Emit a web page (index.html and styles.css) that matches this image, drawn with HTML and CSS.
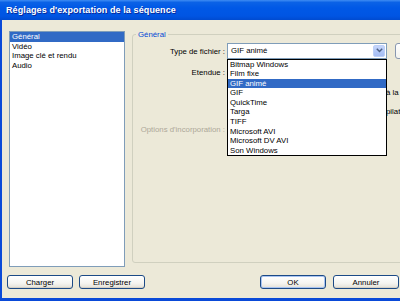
FILE: index.html
```html
<!DOCTYPE html>
<html lang="fr">
<head>
<meta charset="utf-8">
<title>Réglages d'exportation de la séquence</title>
<link rel="stylesheet" href="styles.css">
</head>
<body>
<div class="win">
  <div class="titlebar">Réglages d'exportation de la séquence</div>
  <div class="frame">
    <div class="dialog">
      <div class="top">
        <ul class="listbox">
          <li class="sel">Général</li>
          <li>Vidéo</li>
          <li>Image clé et rendu</li>
          <li>Audio</li>
        </ul>
        <fieldset class="group">
          <legend>Général</legend>
          <div class="form">
            <div class="lbl r1">Type de fichier :</div>
            <div class="ctl r1">
              <div class="combo">
                <span class="combo-val">GIF animé</span>
                <span class="combo-btn"><svg width="7" height="5" viewBox="0 0 7 5"><path d="M0.8 0.8 L3.5 3.5 L6.2 0.8" fill="none" stroke="#4d6185" stroke-width="1.5"/></svg></span>
                <ul class="popup">
                  <li>Bitmap Windows</li>
                  <li>Film fixe</li>
                  <li class="sel">GIF animé</li>
                  <li>GIF</li>
                  <li>QuickTime</li>
                  <li>Targa</li>
                  <li>TIFF</li>
                  <li>Microsoft AVI</li>
                  <li>Microsoft DV AVI</li>
                  <li>Son Windows</li>
                </ul>
              </div>
              <button class="side-btn" aria-label="Paramètres"></button>
            </div>
            <div class="lbl r2">Etendue :</div>
            <div class="ctl r2"></div>
            <div class="lbl r3"></div>
            <div class="ctl r3"><span class="frag">à la l</span></div>
            <div class="lbl r4"></div>
            <div class="ctl r4"><span class="frag">pilat</span></div>
            <div class="lbl r5 dis">Options d'incorporation :</div>
            <div class="ctl r5"></div>
          </div>
        </fieldset>
      </div>
      <div class="buttons">
        <div class="bgroup">
          <button class="btn w66">Charger</button>
          <button class="btn w66">Enregistrer</button>
        </div>
        <div class="bgroup">
          <button class="btn w66 def">OK</button>
          <button class="btn w66">Annuler</button>
        </div>
      </div>
    </div>
  </div>
</div>
</body>
</html>
```
FILE: styles.css
```css
* { box-sizing: border-box; }
html, body { margin: 0; padding: 0; }
body {
  width: 400px;
  height: 301px;
  overflow: hidden;
  font-family: "Liberation Sans", Arial, sans-serif;
  font-size: 7.8px;
  color: #000;
  background: #ECE9D8;
}
.win {
  width: 400px;
  height: 301px;
  display: flex;
  flex-direction: column;
}
.titlebar {
  height: 20px;
  flex: none;
  padding-left: 6px;
  display: flex;
  align-items: center;
  color: #fff;
  font-weight: bold;
  font-size: 9px;
  letter-spacing: 0.1px;
  text-shadow: 1px 1px 0 #0a2a9a;
  background: linear-gradient(#3f8cf3 0%, #0b62e6 12%, #0058e6 40%, #0055e3 80%, #004bd0 100%);
  white-space: nowrap;
}
.frame {
  flex: 1;
  display: flex;
  border-left: 2px solid #0a4ad8;
  border-bottom: 3px solid #0a4ad8;
  min-height: 0;
}
.dialog {
  flex: 1;
  background: #ECE9D8;
  padding: 11px 0 9px 5px;
  display: flex;
  flex-direction: column;
  min-width: 0;
}
.top {
  height: 236px;
  display: flex;
  align-items: flex-start;
}
.listbox {
  margin: 0 0 0 2px;
  padding: 0;
  list-style: none;
  width: 116px;
  height: 236px;
  flex: none;
  background: #fff;
  border: 1px solid #7f9db9;
}
.listbox li {
  height: 9.6px;
  line-height: 9.6px;
  padding-left: 2px;
  white-space: nowrap;
}
.listbox li.sel,
.popup li.sel {
  background: #316ac5;
  color: #fff;
}
.group {
  flex: 1;
  margin: -1.5px -12px 0 7px;
  height: 233.5px;
  border: 1px solid #d0d0bf;
  border-radius: 3px;
  padding: 0;
  min-width: 0;
}
.group legend {
  color: #0046d5;
  padding: 0 2px;
  margin-left: 3px;
  line-height: 9px;
}
.form {
  display: grid;
  grid-template-columns: 92px 1fr;
  grid-template-rows: 16px 27px 14px 24px 12px;
  column-gap: 2px;
  margin-top: 4px;
}
.lbl {
  text-align: right;
  white-space: nowrap;
  display: flex;
  align-items: center;
  justify-content: flex-end;
}
.lbl.r1 { padding-top: 1px; }
.lbl.dis { color: #aca899; }
.ctl {
  display: flex;
  align-items: center;
  white-space: nowrap;
}
.combo {
  position: relative;
  width: 160px;
  height: 16px;
  background: #fff;
  border: 1px solid #7f9db9;
  display: flex;
  align-items: center;
  justify-content: space-between;
  padding: 1px 1px 1px 3px;
  flex: none;
}
.combo-btn {
  width: 12px;
  height: 12px;
  border-radius: 2px;
  background: linear-gradient(#c6d6fb, #b0c6f7 60%, #a6bdf3);
  border: 1px solid #bcd0f8;
  display: flex;
  align-items: center;
  justify-content: center;
}
.popup {
  position: absolute;
  top: 15px;
  left: -1px;
  width: 160px;
  margin: 0;
  padding: 0;
  list-style: none;
  background: #fff;
  border: 1px solid #000;
  z-index: 2;
}
.popup li {
  height: 9.6px;
  line-height: 9.6px;
  padding-left: 2px;
}
.side-btn {
  margin-left: 8px;
  width: 30px;
  height: 16px;
  flex: none;
  border: 1px solid #8897b0;
  border-radius: 3px;
  background: linear-gradient(#ffffff, #f3f3ef);
  padding: 0;
}
.frag { margin-left: 159px; }
.buttons {
  margin-top: 8px;
  height: 14px;
  display: flex;
  justify-content: space-between;
  padding-right: 1px;
}
.bgroup {
  display: flex;
  gap: 6px;
}
.bgroup + .bgroup { gap: 7px; }
.btn {
  font-family: "Liberation Sans", Arial, sans-serif;
  font-size: 7.8px;
  color: #000;
  height: 14px;
  padding: 0;
  border: 1px solid #1c4a86;
  border-radius: 3px;
  background: linear-gradient(#ffffff 0%, #f5f4f0 60%, #e3e0d6 100%);
  box-shadow: inset 0 -1px 0 #d6d0c5;
}
.btn.def {
  box-shadow: inset 0 0 0 1px #a9c4f1;
}
.w66 { width: 66px; }
```
